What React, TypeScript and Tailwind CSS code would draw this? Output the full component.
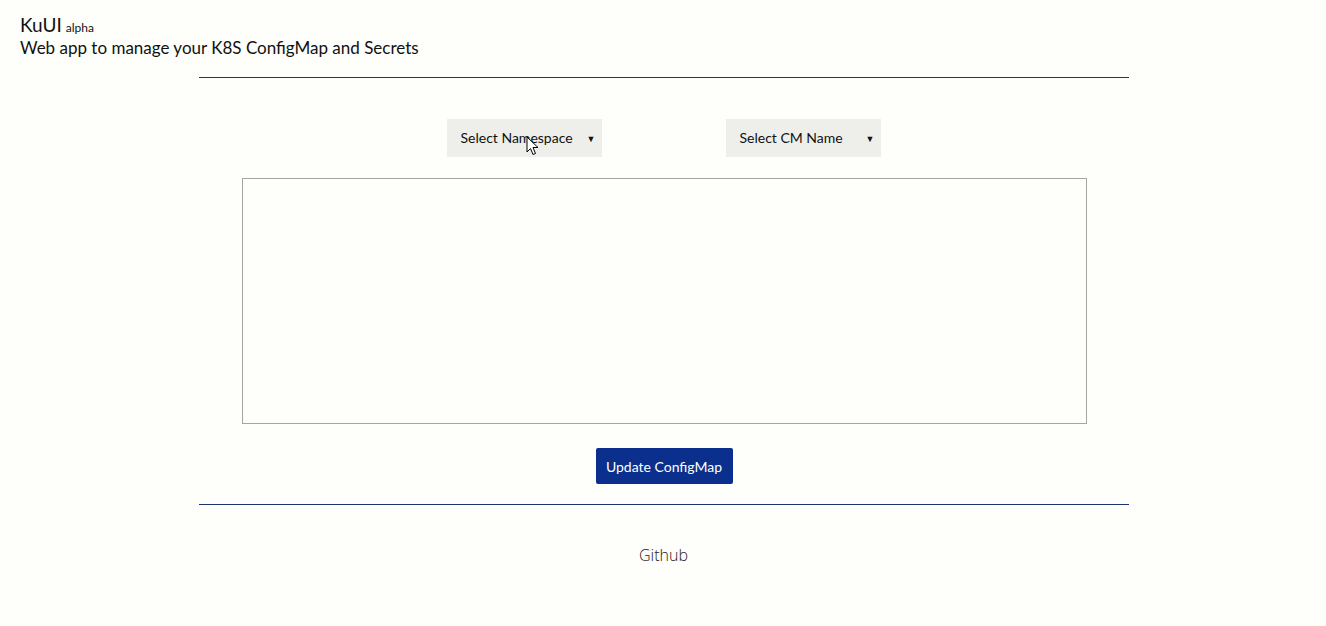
const SelectBox = ({ label, cursor }: { label: string; cursor?: boolean }) => (
    <div className="relative w-[155px] h-[38px] bg-[#eeeeea] flex items-center pl-[14px] pb-[1px] text-[14px] text-[#111]">
        <span>{label}</span>
        <span className="absolute right-[6px] top-0 bottom-0 flex items-center text-[9px] leading-none">▼</span>
        {cursor && (
            <svg className="absolute left-[79px] top-[17px]" width="13" height="20" viewBox="0 0 13 20">
                <path d="M1 1 L1 16 L4.5 12.5 L7 18.5 L9.5 17.5 L7 11.5 L12 11.5 Z" fill="#fff" stroke="#000" strokeWidth="1" strokeLinejoin="round" />
            </svg>
        )}
    </div>
);

export default function App() {
    return (
        <div className="min-h-[626px] bg-[#fefefa] font-['Lato','Open_Sans',sans-serif] text-[#111]">
            {/* Header */}
            <header className="pl-[20px] pt-[14px]">
                <div className="flex items-baseline gap-[4px] leading-[22px]">
                    <span className="text-[19px]">KuUI</span>
                    <span className="text-[12px]">alpha</span>
                </div>
                <p className="text-[17px] leading-[18px]">Web app to manage your K8S ConfigMap and Secrets</p>
            </header>

            <main className="w-[931px] mx-auto mt-[20px] pl-[1px]">
                <hr className="border-0 border-t border-[#1a3570]" />

                <div className="flex justify-center gap-[124px] mt-[41px]">
                    <SelectBox label="Select Namespace" cursor />
                    <SelectBox label="Select CM Name" />
                </div>

                <div className="flex justify-center mt-[21px] pl-[1px]">
                    <textarea className="w-[845px] h-[246px] border border-[#a5a5a2] bg-[#fefefa] resize-none outline-none" />
                </div>

                <div className="flex justify-center mt-[24px] pl-[1px]">
                    <button className="w-[137px] h-[36px] bg-[#0a2f8c] text-white text-[14px] rounded-[2px]">
                        Update ConfigMap
                    </button>
                </div>

                <hr className="border-0 border-t border-[#1a3570] mt-[20px]" />

                <footer className="text-center mt-[38px] text-[16px] text-[#222] font-['Open_Sans',sans-serif] font-light">
                    Github
                </footer>
            </main>
        </div>
    );
}
